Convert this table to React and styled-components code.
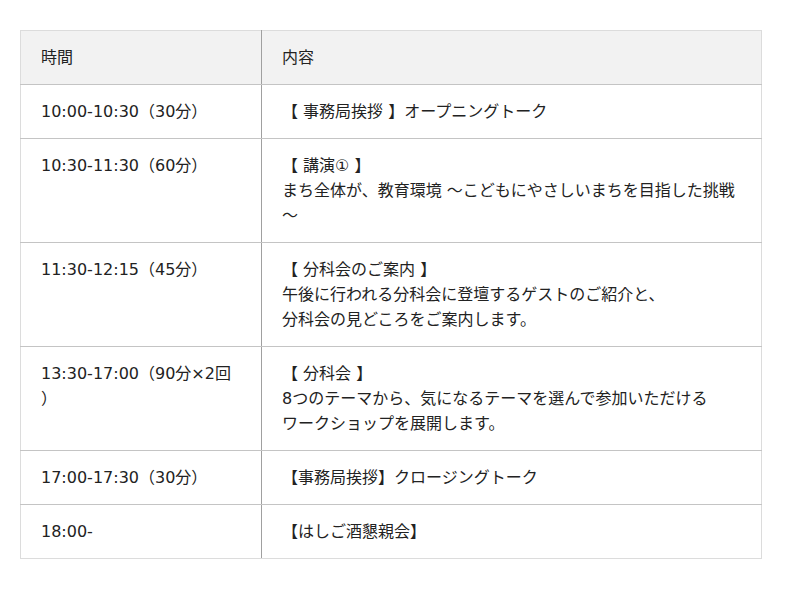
import React from 'react';
import styled, { createGlobalStyle } from 'styled-components';

const GlobalStyle = createGlobalStyle`
    body {
        margin: 0;
        background: #fff;
        font-family: 'DejaVu Sans', 'Noto Sans CJK JP', sans-serif;
        color: #222;
    }
`;

const Page = styled.div`
    padding: 30px 38px 30px 20px;
`;

const Table = styled.table`
    width: 742px;
    border-collapse: collapse;
    border: 1px solid #dcdcdc;
    font-size: 16px;
    line-height: 25px;
    table-layout: fixed;
`;

const Th = styled.th`
    background: #f2f2f2;
    font-weight: normal;
    text-align: left;
    padding: ${props => (props.first ? '14px 28px 14px 20px' : '14px 20px')};
    border-bottom: 1px solid #c4c4c4;
    border-right: ${props => (props.first ? '1px solid #a0a0a0' : 'none')};
    width: ${props => (props.first ? '192px' : 'auto')};
`;

const Tr = styled.tr`
    &:last-child td {
        border-bottom: 1px solid #dcdcdc;
    }
`;

const Td = styled.td`
    vertical-align: top;
    padding: ${props => (props.first ? '14px 28px 14px 20px' : '14px 20px')};
    border-bottom: 1px solid #c4c4c4;
    border-right: ${props => (props.first ? '1px solid #a0a0a0' : 'none')};
    line-break: anywhere;
`;

const schedule = [
    { time: '10:00-10:30（30分）', lines: ['【 事務局挨拶 】オープニングトーク'] },
    {
        time: '10:30-11:30（60分）',
        lines: ['【 講演① 】', 'まち全体が、教育環境 〜こどもにやさしいまちを目指した挑戦〜'],
    },
    {
        time: '11:30-12:15（45分）',
        lines: [
            '【 分科会のご案内 】',
            '午後に行われる分科会に登壇するゲストのご紹介と、',
            '分科会の見どころをご案内します。',
        ],
    },
    {
        time: '13:30-17:00（90分×2回）',
        lines: [
            '【 分科会 】',
            '8つのテーマから、気になるテーマを選んで参加いただける',
            'ワークショップを展開します。',
        ],
    },
    { time: '17:00-17:30（30分）', lines: ['【事務局挨拶】クロージングトーク'] },
    { time: '18:00-', lines: ['【はしご酒懇親会】'] },
];

const App = () => {
    return (
        <Page>
            <GlobalStyle />
            <Table>
                <thead>
                    <tr>
                        <Th first>時間</Th>
                        <Th>内容</Th>
                    </tr>
                </thead>
                <tbody>
                    {schedule.map(row => (
                        <Tr key={row.time}>
                            <Td first>{row.time}</Td>
                            <Td>
                                {row.lines.map((line, i) => (
                                    <React.Fragment key={i}>
                                        {i > 0 && <br />}
                                        {line}
                                    </React.Fragment>
                                ))}
                            </Td>
                        </Tr>
                    ))}
                </tbody>
            </Table>
        </Page>
    );
};

export default App;
